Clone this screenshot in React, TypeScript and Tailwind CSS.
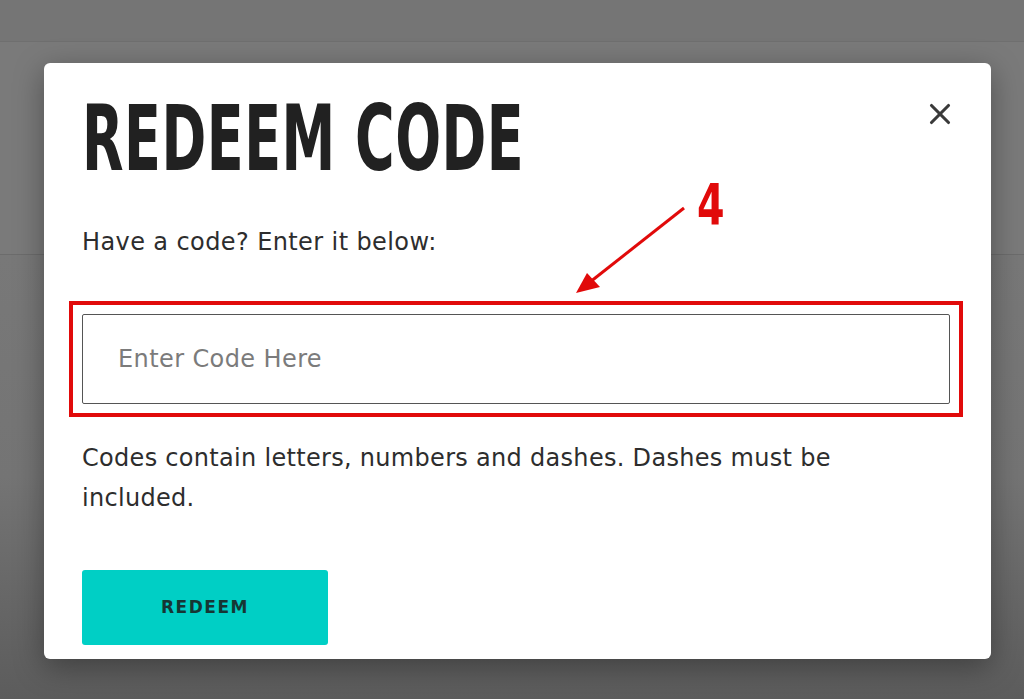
import { X } from "lucide-react";

const body = { fontFamily: '"DejaVu Sans", "Liberation Sans", sans-serif' };
const title = { fontFamily: '"DejaVu Sans Condensed", "Liberation Sans", sans-serif' };

export default function App() {
  return (
    <div className="relative h-[699px] w-[1024px] overflow-hidden bg-[#777777]">
      {/* page behind the overlay */}
      <div className="h-[42px] border-b border-[#6f6f6f] bg-[#757575]" />
      <div className="h-[213px] border-b border-[#6c6c6c] bg-[#7a7a7a]" />
      <div className="h-[444px] bg-gradient-to-b from-[#787878] via-[#747474] to-[#5c5c5c]" />

      {/* modal */}
      <div className="absolute inset-0 flex items-start justify-start pl-[44px] pt-[63px]">
        <div className="relative flex h-[596px] w-[947px] flex-col rounded-[6px] bg-white px-[38px] pt-[40px] shadow-[0_8px_30px_rgba(0,0,0,0.35)]" style={body}>
          <button className="absolute right-[34px] top-[34px] text-[#3a3a3a]">
            <X size={34} strokeWidth={2.2} />
          </button>
          <h1
            className="origin-left scale-y-[1.5] text-[60px] font-bold leading-[70px] tracking-[0.5px] text-[#212121]"
            style={title}
          >
            REDEEM CODE
          </h1>
          <p className="mt-[55px] text-[24px] leading-[28px] tracking-[0.4px] text-[#2d2d2d]">Have a code? Enter it below:</p>

          <div className="relative mt-[45px] -ml-[13px] w-[894px] border-[4px] border-[#e10a0a] px-[9px] py-[9px]">
            <div className="flex h-[90px] items-center rounded-[2px] border-[1.5px] border-[#555555] pl-[35px] text-[24px] tracking-[0.4px] text-[#7b7b7b]">
              Enter Code Here
            </div>
            {/* annotation */}
            <svg className="absolute -top-[130px] left-[490px]" width="180" height="130" viewBox="0 0 180 130">
              <line x1="121" y1="33" x2="22" y2="111" stroke="#e10a0a" strokeWidth="3" />
              <polygon points="13,118 24,98 37,112" fill="#e10a0a" />
            </svg>
            <span
              className="absolute -top-[131px] left-[624px] origin-top scale-y-[1.3] text-[44px] font-bold leading-[48px] text-[#e10a0a]"
              style={title}
            >
              4
            </span>
          </div>

          <p className="mt-[21px] w-[790px] text-[24px] leading-[40px] tracking-[0.3px] text-[#2d2d2d]">
            Codes contain letters, numbers and dashes. Dashes must be included.
          </p>

          <button className="mt-[52px] flex h-[75px] w-[246px] items-center justify-center rounded-[3px] bg-[#00cfc5] text-[17px] font-bold tracking-[1.5px] text-[#163634]">
            REDEEM
          </button>
        </div>
      </div>
    </div>
  );
}
